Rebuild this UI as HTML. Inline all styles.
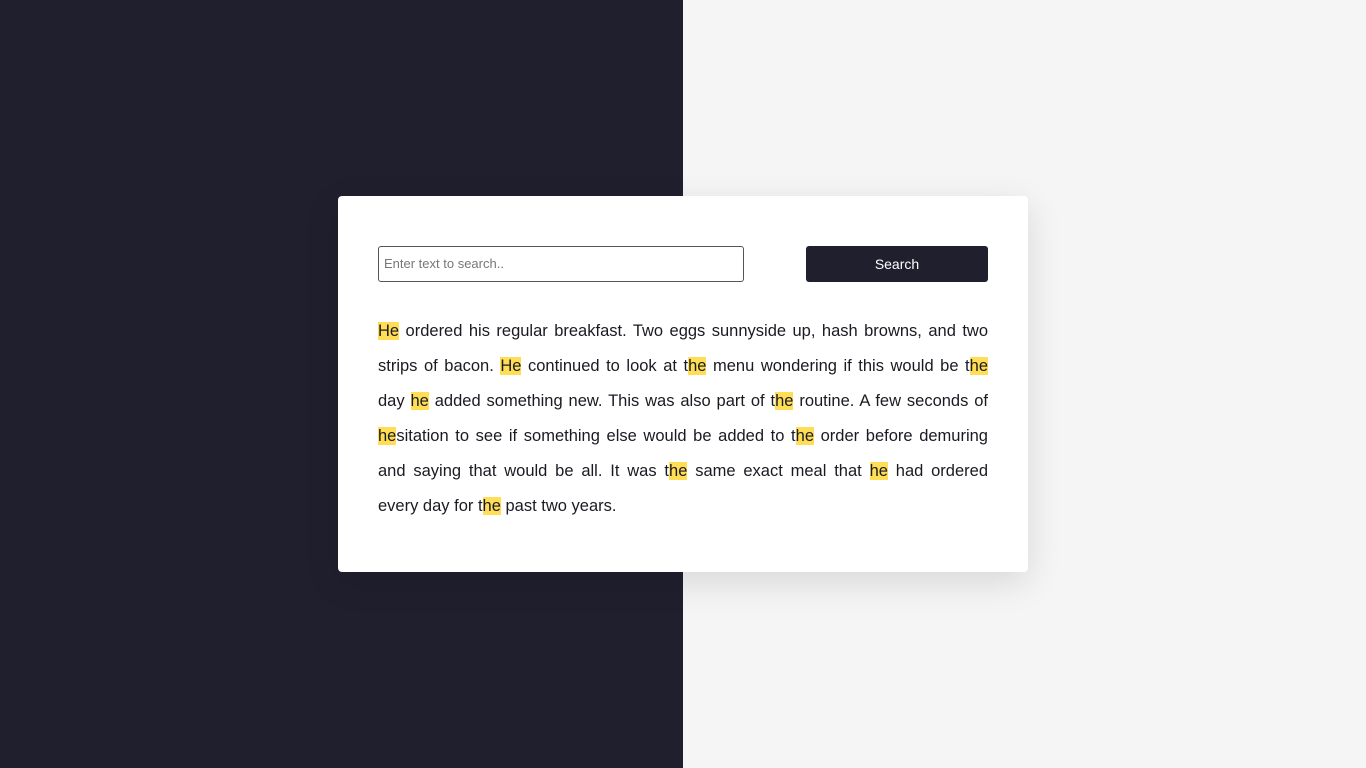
<!DOCTYPE html>
<html><head><meta charset="utf-8"><style>
html,body{margin:0;width:1366px;height:768px;overflow:hidden;font-family:"Liberation Sans",sans-serif;}
body{background:linear-gradient(to right,#201f2e 0,#201f2e 683px,#f5f5f5 683px);position:relative}
.card{position:absolute;left:338px;top:196px;width:690px;height:376px;background:#fff;border-radius:4px;box-shadow:0 10px 35px rgba(0,0,0,0.12)}
.inp{position:absolute;left:40px;top:50px;height:34px;border:1px solid #555;border-radius:3px;box-sizing:content-box;font-size:13px;color:#777;line-height:34px;padding-left:5px;width:359px}
.btn{position:absolute;left:468px;top:50px;width:182px;height:36px;background:#201f2e;border-radius:3px;color:#fff;font-size:14px;text-align:center;line-height:36px}
.txt{position:absolute;left:40px;top:118px;width:610px;font-size:16.5px;color:#1a1a22}
.l{height:35px;line-height:35px;text-align:justify;text-align-last:justify;white-space:nowrap;}
.l.last{text-align-last:left}
m{background:#ffdd55;}
</style></head><body>
<div class="card">
<div class="inp">Enter text to search..</div>
<div class="btn">Search</div>
<div class="txt">
<div class="l"><m>He</m> ordered his regular breakfast. Two eggs sunnyside up, hash browns, and two</div>
<div class="l">strips of bacon. <m>He</m> continued to look at t<m>he</m> menu wondering if this would be t<m>he</m></div>
<div class="l">day <m>he</m> added something new. This was also part of t<m>he</m> routine. A few seconds of</div>
<div class="l"><m>he</m>sitation to see if something else would be added to t<m>he</m> order before demuring</div>
<div class="l">and saying that would be all. It was t<m>he</m> same exact meal that <m>he</m> had ordered</div>
<div class="l last">every day for t<m>he</m> past two years.</div>
</div>
</div>
</body></html>
